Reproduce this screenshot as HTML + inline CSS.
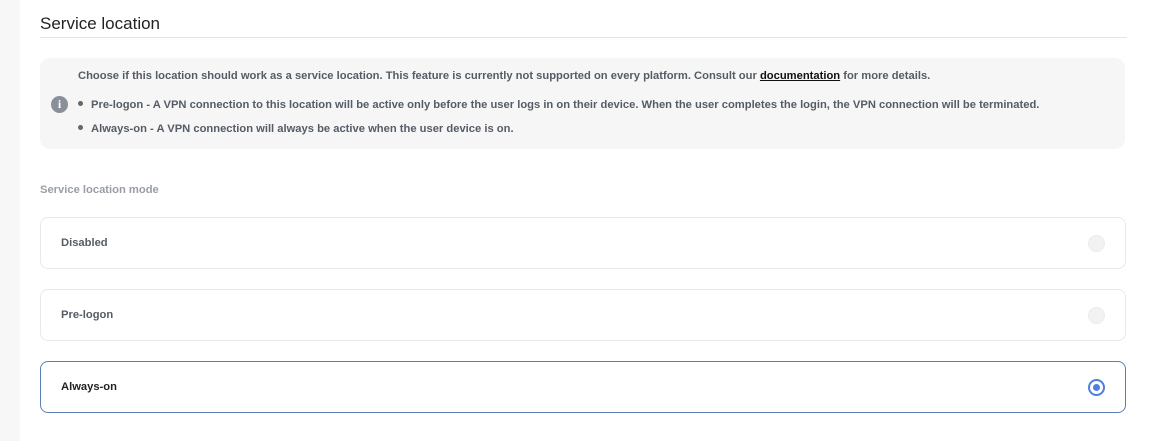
<!DOCTYPE html>
<html><head><style>
*{margin:0;padding:0;box-sizing:border-box}
body{width:1165px;height:441px;background:#fff;font-family:"Liberation Sans",sans-serif;position:relative;overflow:hidden}
.side{position:absolute;left:0;top:0;width:20px;height:441px;background:#f7f7f8}
h2{position:absolute;left:40px;top:14px;font-size:17px;font-weight:normal;color:#222}
.hr{position:absolute;left:40px;top:37px;width:1087px;height:1px;background:#e4e4e6}
.info{position:absolute;left:40px;top:58px;width:1085px;height:91px;background:#f6f6f7;border-radius:10px;font-size:11.2px;font-weight:bold;color:#555c66}
.info p{position:absolute;left:38px;white-space:nowrap}
.info a{color:#111;text-decoration:underline}
.dot{display:inline-block;width:5px;height:5px;border-radius:50%;background:#666;margin-right:8px;vertical-align:2px}
.ic{position:absolute;left:11px;top:38px;width:17px;height:17px;border-radius:50%;background:#8a9099;color:#fff;font-size:12px;text-align:center;line-height:17px;font-family:"Liberation Serif",serif}
.lbl{position:absolute;left:40px;top:184px;font-size:11.2px;font-weight:bold;color:#999ea6}
.card{position:absolute;left:40px;width:1086px;height:52px;border:1px solid #e8e8ea;border-radius:8px;font-size:11.2px;font-weight:bold;color:#555c66}
.card span{position:absolute;left:20px;top:19px}
.r{position:absolute;left:1047px;top:17px;width:17px;height:17px;border-radius:50%;background:#f2f2f3;border:1px solid #ececee}
.sel{border-color:#5b7fb0}
.sel span{color:#222}
.sel .r{background:#fff;border:2px solid #4f7ee0}
.sel .r::after{content:"";position:absolute;left:3px;top:3px;width:7px;height:7px;border-radius:50%;background:#4f7ee0}
</style></head><body>
<div class="side"></div>
<h2>Service location</h2>
<div class="hr"></div>
<div class="info">
<div class="ic">i</div>
<p style="top:12px">Choose if this location should work as a service location. This feature is currently not supported on every platform. Consult our <a>documentation</a> for more details.</p>
<p style="top:41px"><span class="dot"></span>Pre-logon - A VPN connection to this location will be active only before the user logs in on their device. When the user completes the login, the VPN connection will be terminated.</p>
<p style="top:65px"><span class="dot"></span>Always-on - A VPN connection will always be active when the user device is on.</p>
</div>
<div class="lbl">Service location mode</div>
<div class="card" style="top:217px"><span>Disabled</span><div class="r"></div></div>
<div class="card" style="top:289px"><span>Pre-logon</span><div class="r"></div></div>
<div class="card sel" style="top:361px"><span>Always-on</span><div class="r"></div></div>
</body></html>
